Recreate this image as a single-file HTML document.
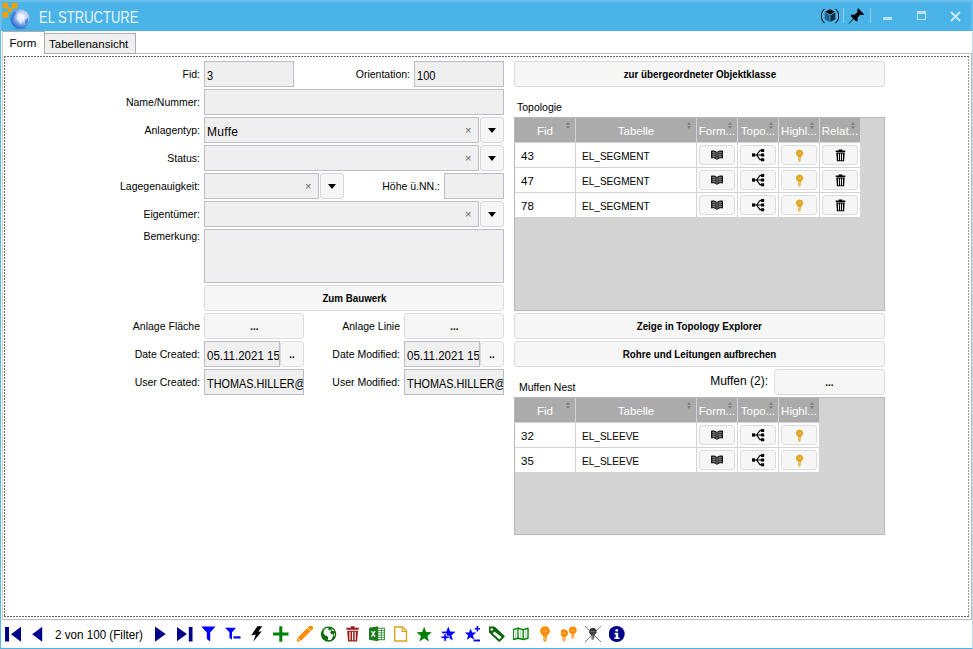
<!DOCTYPE html>
<html><head><meta charset="utf-8"><title>EL STRUCTURE</title>
<style>
html,body{margin:0;padding:0;}
body{width:973px;height:649px;overflow:hidden;background:#fff;font-family:"Liberation Sans",sans-serif;position:relative;}
#win{position:absolute;left:0;top:0;width:971px;height:648px;border:1px solid #4ab3e8;border-top:none;border-left-color:#5cbaea;border-right-color:#b4dcf4;background:#fff;}
#title{position:absolute;left:0;top:0;width:973px;height:31px;background:#4ab3e8;}
#title .hl{position:absolute;left:0;top:0;width:973px;height:2px;background:#68bfec;}
#title .t{position:absolute;left:39px;top:6.5px;font-size:16.5px;color:#fff;line-height:20px;white-space:nowrap;transform:scaleX(.79);transform-origin:0 50%;opacity:.88;}
.abs{position:absolute;}
.tab{position:absolute;font-size:11.5px;line-height:16px;color:#000;box-sizing:border-box;border:1px solid #acacac;white-space:nowrap;}
#frame{position:absolute;left:2px;top:53px;width:970px;height:567px;box-sizing:border-box;border:1px solid #bdbdbd;border-left-color:#d0d0d0;background:#fff;}
#dots{position:absolute;left:4px;top:56px;width:965px;height:561px;
 background:
 repeating-linear-gradient(90deg,#666 0 2px,transparent 2px 3px) left top/100% 1px no-repeat,
 repeating-linear-gradient(90deg,#666 0 2px,transparent 2px 3px) left bottom/100% 1px no-repeat,
 repeating-linear-gradient(180deg,#666 0 2px,transparent 2px 3px) left top/1px 100% no-repeat,
 repeating-linear-gradient(180deg,#999 0 2px,transparent 2px 3px) right top/1px 100% no-repeat;}
.lbl{position:absolute;font-size:10.5px;line-height:14px;color:#000;white-space:nowrap;text-align:right;}
.tb{position:absolute;box-sizing:border-box;border:1px solid #bbbdc6;background:#efefef;font-size:12px;line-height:27px;color:#000;padding-left:2px;white-space:nowrap;overflow:hidden;}
.btn{position:absolute;box-sizing:border-box;border:1px solid #dcdcdc;background:#f6f6f6;border-radius:3px;font-size:9.9px;font-weight:bold;color:#000;text-align:center;white-space:nowrap;}
.dd{border-color:#d3d5db;}
.x{position:absolute;font-size:11px;color:#666;line-height:12px;}
.arr{position:absolute;width:0;height:0;border-left:4px solid transparent;border-right:4px solid transparent;border-top:5px solid #000;}
.grid{position:absolute;box-sizing:border-box;border:1px solid #b8b8b8;background:#d3d3d3;}
.gh{position:absolute;background:#ababab;color:#fff;font-size:11.5px;line-height:26px;height:24px;text-align:center;white-space:nowrap;overflow:hidden;}
.gc{position:absolute;background:#fff;color:#000;font-size:11.5px;line-height:27px;height:24px;white-space:nowrap;overflow:hidden;}
.gb{position:absolute;box-sizing:border-box;border:1px solid #dcdcdc;background:#f6f6f6;border-radius:3px;width:35px;height:20px;}
.w{display:inline-block;transform:translateY(.6px);}
.bt{display:inline-block;font-size:10.5px;transform:scaleX(.93);}
.cap{display:inline-block;transform:scaleX(.92);transform-origin:0 50%;}
.so{position:absolute;right:4px;top:4px;width:5px;height:8px;}
.so:before{content:"";position:absolute;left:0;top:0;border-left:2.5px solid transparent;border-right:2.5px solid transparent;border-bottom:3px solid #808080;}
.so:after{content:"";position:absolute;left:0;top:4px;border-left:2.5px solid transparent;border-right:2.5px solid transparent;border-top:3px solid #808080;}
.ic{position:absolute;left:10px;top:1px;}
.ti{position:absolute;top:6px;overflow:visible;}
.nav{position:absolute;left:53.5px;top:5px;font-size:13px;line-height:20px;white-space:nowrap;color:#000;}
.nav span{display:inline-block;transform:scaleX(.895);transform-origin:0 50%;}
#bar{position:absolute;left:1px;top:620px;width:971px;height:27px;background:#fff;}
</style></head><body>
<svg width="0" height="0" style="position:absolute">
<defs>
<symbol id="i-book" viewBox="0 0 16 16"><path d="M1 3.700C3 3.200 5.200 3.500 7 4.900C8.800 3.500 11 3.200 13 3.700V11.500C11 11 8.800 11.200 7 12.900C5.200 11.200 3 11 1 11.500Z" fill="#1a1a1a"/><path d="M7 5V12.600M2 5.600C3.600 5.200 5 5.500 6.400 6.500M2 7.600C3.600 7.200 5 7.500 6.400 8.500M2 9.600C3.600 9.200 5 9.500 6.400 10.500M12 5.600C10.400 5.200 9 5.500 7.600 6.500M12 7.600C10.400 7.200 9 7.500 7.600 8.500M12 9.600C10.400 9.200 9 9.500 7.600 10.500M4 4.600V10.500M10 4.600V10.500" stroke="#fff" stroke-opacity=".6" stroke-width=".6" fill="none"/></symbol>
<symbol id="i-topo" viewBox="0 0 16 16"><path d="M3.500 8H10.500M10.500 3.500L9 3.500L5.600 8L9 12.700L10.500 12.700" stroke="#000" stroke-width="1.200" fill="none"/><rect x="1" y="6.400" width="3.100" height="3.200" fill="#000"/><rect x="9.900" y="2" width="3.300" height="2.900" rx=".5" fill="#000"/><rect x="9.900" y="6.500" width="3.300" height="3.100" rx=".5" fill="#000"/><rect x="9.900" y="11.300" width="3.300" height="2.900" rx=".5" fill="#000"/></symbol>
<symbol id="i-bulb" viewBox="0 0 16 16"><g transform="translate(1.400,2.250) scale(.77)"><path d="M8 .2a4.800 4.800 0 0 0-2.700 8.800c.6.500.8 1 .8 1.700h3.800c0-.7.200-1.200.8-1.700A4.800 4.800 0 0 0 8 .2Z" fill="currentColor"/><path d="M6 12.100l4-.9M6 13.500l4-.9M6.300 14.900l3.400-.8M7.300 15.800l1.500-.3" stroke="currentColor" stroke-width="1.100" fill="none"/><path d="M6.600 4.600h1.100v1.300H6.600zM8.400 4.600h1.100v1.300H8.400z" fill="#fff" fill-opacity=".55"/></g></symbol>
<symbol id="i-trash" viewBox="0 0 16 16"><path d="M5.700 2.400h3.600v1.200h3v1.500h-9.600v-1.500h3z" fill="currentColor"/><path d="M3.300 5.600h8.400l-.6 8.700H3.900Z" fill="currentColor"/><path d="M5.500 6.600v6.700M7.500 6.600v6.700M9.500 6.600v6.700" stroke="#fff" stroke-width=".9"/></symbol>
<symbol id="t-first" viewBox="0 0 16 16"><rect x="0" y="1" width="4" height="14.500" fill="#00008b"/><path d="M16 .7V15.800L6 8.250Z" fill="#00008b"/></symbol>
<symbol id="t-prev" viewBox="0 0 16 16"><path d="M13.200 .7V15.800L3.200 8.250Z" fill="#00008b"/></symbol>
<symbol id="t-next" viewBox="0 0 16 16"><path d="M2 .5V15.700L12.700 8.100Z" fill="#00008b"/></symbol>
<symbol id="t-last" viewBox="0 0 16 16"><path d="M-.8 .5V15.700L9.900 8.100Z" fill="#00008b"/><rect x="11.800" y="1" width="3.700" height="14.500" fill="#00008b"/></symbol>
<symbol id="t-filter" viewBox="0 0 16 16"><path d="M.2 .5H14.500L9.200 6.500V15.500L5.800 13V6.500Z" fill="#0000ff"/></symbol>
<symbol id="t-filterm" viewBox="0 0 16 16"><path d="M0 1.700H11L7 6.300V13.700L4.400 11.800V6.300Z" fill="#0000ff"/><rect x="8.500" y="10.300" width="7" height="2.200" fill="#0000ff"/></symbol>
<symbol id="t-bolt" viewBox="0 0 16 16"><path d="M8.300 .3H13.200L9.300 5.800L12.800 5.200L4.200 15.700L6.800 8.600L2.200 9.600Z" fill="#000"/></symbol>
<symbol id="t-plus" viewBox="0 0 16 16"><path d="M6.300 .3h3v6.200h6.200v3h-6.200v6.200h-3v-6.200h-6.200v-3h6.200z" fill="#008000"/></symbol>
<symbol id="t-pencil" viewBox="0 0 16 16"><g transform="translate(-.4,15.900) rotate(-45)" fill="#ff8c00"><path d="M0 0L3.200 -2.300V2.300Z"/><rect x="3.900" y="-2.300" width="13.600" height="4.600"/><path d="M18.200 -2.300H20a2.300 2.300 0 0 1 0 4.600H18.200Z"/></g></symbol>
<symbol id="t-globe" viewBox="0 0 16 16"><circle cx="7.600" cy="8.100" r="7.700" fill="#0b6b0b"/><path d="M3.500 3.200C5 2 6.500 1.900 7.800 2.300L7.200 3.600L8.600 4.600L9.800 3.400L10.400 4.600L9.200 6.200L10 7.800L11.800 8.200L12.600 9.800L11.400 11.600L10.200 13.800C9 14.500 7.600 14.400 6.600 13.800L7.400 11.800L6.200 10L4.200 9.400L2.600 7.600C2.300 6 2.600 4.400 3.500 3.200Z" fill="#fff"/><path d="M10.600 2.600L12.800 4.200L13.400 5.200L11.600 5L10.800 4Z" fill="#fff"/><path d="M13.200 6.600L14 8.400L13.400 10.400L12.800 8.400Z" fill="#fff" fill-opacity=".85"/></symbol>
<symbol id="t-excel" viewBox="0 0 16 16"><rect x="7" y="2.200" width="8.400" height="11.500" fill="#fff" stroke="#2e8b2e" stroke-width="1"/><path d="M9 4.500h6M9 6.800h6M9 9.100h6M9 11.400h6M12.300 2.500v11" stroke="#2e8b2e" stroke-width=".8"/><path d="M-.6 1.900L9.200 .3V15.300L-.6 13.600Z" fill="#1e7a1e"/><path d="M2.600 5L6 10.600M6 5L2.600 10.600" stroke="#fff" stroke-width="1.300"/></symbol>
<symbol id="t-page" viewBox="0 0 16 16"><path d="M1.700 1H9.500L13.500 5V15H1.700Z" fill="#fff" stroke="#daa520" stroke-width="1.400"/><path d="M9.300 1V5.300H13.500" fill="none" stroke="#daa520" stroke-width="1.200"/></symbol>
<symbol id="t-star" viewBox="0 0 16 16"><path transform="translate(-.4,.8) scale(.95,.96)" d="M8 0l2.100 5.500 5.900.300-4.600 3.700 1.600 5.700L8 12l-5 3.200 1.600-5.700L0 5.800l5.900-.300z" fill="currentColor"/></symbol>
<symbol id="t-tag" viewBox="0 0 16 16"><path d="M-.7 1.700a1.300 1.300 0 0 1 1.300-1.300H4.800a1.500 1.500 0 0 1 1 .4L15.200 9.400a1.300 1.300 0 0 1 0 1.900L11.200 15.300a1.300 1.300 0 0 1-1.900 0L-.3 6.200a1.500 1.500 0 0 1-.4-1Z" fill="#0a640a"/><path d="M5.300 5.500L12.600 10.900L10.400 13.400L3.700 7.500Z" fill="#fff"/><circle cx="2.700" cy="3.400" r="1.250" fill="#fff"/></symbol>
<symbol id="t-map" viewBox="0 0 16 16"><path d="M.2 3.600L5 2.300L10.200 3.600L15 2.300V12.200L10.200 13.500L5 12.200L.2 13.500Z" fill="#fff" stroke="#008000" stroke-width="1.400" stroke-linejoin="round"/><path d="M5 2.500V12.200M10.200 3.600V13.500" stroke="#008000" stroke-width="1.300"/><path d="M2.700 3.800V12M7.600 3.800V12.200M12.600 3.800V12" stroke="#008000" stroke-opacity=".3" stroke-width="1"/></symbol>
<symbol id="t-bulb" viewBox="0 0 16 16"><path d="M8 .2a4.800 4.800 0 0 0-2.700 8.800c.6.500.8 1 .8 1.700h3.800c0-.7.200-1.200.8-1.700A4.800 4.800 0 0 0 8 .2Z" fill="currentColor"/><path d="M6 12.100l4-.9M6 13.500l4-.9M6.300 14.900l3.400-.8M7.300 15.800l1.500-.3" stroke="currentColor" stroke-width="1" fill="none"/><path d="M6.200 4.500v1.600M7.900 4.500v1.600M9.600 4.500v1.600" stroke="#fff" stroke-opacity=".7" stroke-width=".7"/></symbol>
<symbol id="t-info" viewBox="0 0 16 16"><circle cx="7.700" cy="8" r="8" fill="#00008b"/><path d="M6.400 3.200h2.700v2.300H6.400zM5.600 6.800h3.600v4.700h1.400v1.600H5.400v-1.600h1.300v-3.100H5.600z" fill="#fff"/></symbol>
<symbol id="t-trash" viewBox="0 0 16 16"><path d="M5.800 .2h3.800v1.500h4.200v2H1.400v-2h4.400z" fill="#9b1c1c"/><path d="M2.200 4.700h10.800l-.9 10.900H3.100Z" fill="#9b1c1c"/><path d="M5 5.800v8.400M7.600 5.800v8.400M10.200 5.800v8.400" stroke="#fff" stroke-width="1.100"/></symbol>
<symbol id="t-starp" viewBox="0 0 16 16"><path d="M7.300 .5l1.900 5 5.400.3-4.200 3.400 1.500 5.400-4.600-3-4.600 3 1.500-5.400L0 5.800l5.400-.3z" fill="#0000ff"/><path d="M2.900 7.600h2.400v2.500h2.800v2.400H5.300v2.800H2.900v-2.800H.1v-2.400h2.800z" fill="#0000ff" stroke="#fff" stroke-width=".8"/></symbol>
<symbol id="t-starpm" viewBox="0 0 16 16"><path d="M5.600 2.500l1.500 3.900 4.300.2-3.400 2.700 1.200 4.400-3.600-2.400-3.700 2.400 1.200-4.400L-.3 6.600l4.300-.2z" fill="#0000ff"/><path d="M12.400 0v5.500M9.800 2.750h5.200" stroke="#0000ff" stroke-width="1.500"/><path d="M8.600 14.500h6.400" stroke="#0000ff" stroke-width="1.900"/></symbol>
<symbol id="t-bulb2" viewBox="0 0 16 16"><g transform="translate(-3.300,3) scale(.8)"><use href="#t-bulb"/></g><g transform="translate(5.400,.2) scale(.8)"><use href="#t-bulb"/></g></symbol>
<symbol id="t-bulbx" viewBox="0 0 16 16"><g transform="translate(1.600,1.500) scale(.78)"><use href="#t-bulb"/></g><path d="M0 .2L16 15.900M16 .2L0 15.900" stroke="#555" stroke-width=".8"/></symbol>
</defs></svg>
<div id="win"></div>
<div id="title"><div class="hl"></div><div class="hl" style="width:2px;height:31px;"></div><div class="hl" style="left:971px;width:2px;height:31px;"></div><svg class="abs" style="left:0;top:0;overflow:visible" width="32" height="31" viewBox="0 0 32 31">
<defs><radialGradient id="gl" cx="62%" cy="38%" r="70%"><stop offset="0" stop-color="#f0f5ff"/><stop offset=".4" stop-color="#b5cdf3"/><stop offset=".75" stop-color="#4d86da"/><stop offset="1" stop-color="#2259bd"/></radialGradient></defs>
<rect x="2.500" y="2.800" width="5.800" height="5.600" fill="#f0a000"/><rect x="11.700" y="2.800" width="5.600" height="5.600" fill="#f0a000"/><rect x="2.500" y="11.700" width="5.800" height="5.900" fill="#f0a000"/>
<path d="M8 8L12 12M12 8L8 12" stroke="#f0a000" stroke-width="2"/>
<ellipse cx="20" cy="28.300" rx="7" ry="1.200" fill="#2a86c8" opacity=".5"/>
<circle cx="20.100" cy="18.800" r="9.700" fill="url(#gl)"/>
<path d="M12.500 14.500C13.500 12.500 15 11.500 16 12L15.500 14.500L14 16.500L13.500 20L12 19Z" fill="#3f78d0" opacity=".8"/>
<path d="M25.500 19.500L27.800 18L28 22L26 24.500L24.800 22.500Z" fill="#3f78d0" opacity=".75"/>
<path d="M14 23L17 24.500L20 27L16.500 26.800Z" fill="#4c84d6" opacity=".6"/>
<path d="M17 14.500L20.500 13.500L24 15L25 18L22.500 21.500L20.500 24.500L18.500 21L16.500 19L17.500 16.500Z" fill="#fff" opacity=".55"/>
</svg>
<svg class="abs" style="left:821px;top:8px" width="18" height="16" viewBox="0 0 18 16"><path d="M3.500 .8C1 3 .3 5.500 .3 8s.7 5 3.200 7.200M14.500 .8C17 3 17.700 5.500 17.700 8s-.7 5-3.200 7.200" fill="none" stroke="#10202c" stroke-width="1.100"/><path d="M9 1.200L14 3.800L9 6.400L4 3.800Z" fill="#05080a"/><path d="M3.700 4.600L8.600 7.200V14L3.700 11.200Z" fill="#1f5f86"/><path d="M14.300 4.600L9.400 7.200V14L14.300 11.200Z" fill="#0d2d42"/></svg>
<div class="abs" style="left:843px;top:8px;width:1px;height:15px;background:#8fd0f2;"></div>
<svg class="abs" style="left:848px;top:8px" width="17" height="16" viewBox="0 0 17 16"><path d="M10.200 .3L16.300 6.400L14.600 7L12.200 6.700L9.500 9.800L9.800 12.600L8.300 13.600L5.800 11.100L1 15.800L.6 15.400L5.200 10.500L2.700 8L3.700 6.500L6.600 6.800L9.500 4L9.200 1.800Z" fill="#000"/></svg>
<div class="abs" style="left:870px;top:8px;width:1px;height:15px;background:#8fd0f2;"></div>
<div class="abs" style="left:883px;top:17px;width:9px;height:3px;background:#bfe3f6;"></div>
<div class="abs" style="left:917px;top:11px;width:9px;height:9px;box-sizing:border-box;border:1px solid #bfe3f6;border-top-width:3px;"></div>
<svg class="abs" style="left:950px;top:11px" width="11" height="11" viewBox="0 0 11 11"><path d="M1 1L10 10M10 1L1 10" stroke="#c8e7f7" stroke-width="2"/></svg>
<div class="t">EL STRUCTURE</div></div>
<div id="frame"></div>
<div class="tab" style="left:44px;top:33px;width:92px;height:21px;background:#efefef;padding:2px 0 0 4px;">Tabellenansicht</div>
<div class="tab" style="left:2px;top:31px;width:43px;height:23px;background:#fff;border-bottom:none;border-left-color:#d0d0d0;padding:3px 0 0 6.5px;">Form</div>
<div id="dots"></div>
<div id="form">
<!-- left column labels -->
<div class="lbl" style="right:773px;top:67px;">Fid:</div>
<div class="lbl" style="right:773px;top:95px;">Name/Nummer:</div>
<div class="lbl" style="right:773px;top:123px;">Anlagentyp:</div>
<div class="lbl" style="right:773px;top:151px;">Status:</div>
<div class="lbl" style="right:773px;top:179px;">Lagegenauigkeit:</div>
<div class="lbl" style="right:773px;top:207px;">Eigentümer:</div>
<div class="lbl" style="right:773px;top:229px;">Bemerkung:</div>
<div class="lbl" style="right:773px;top:319px;">Anlage Fläche</div>
<div class="lbl" style="right:773px;top:347px;">Date Created:</div>
<div class="lbl" style="right:773px;top:375px;">User Created:</div>
<div class="lbl" style="right:563px;top:67px;">Orientation:</div>
<div class="lbl" style="right:533px;top:179px;">Höhe ü.NN.:</div>
<div class="lbl" style="right:573px;top:319px;">Anlage Linie</div>
<div class="lbl" style="right:573px;top:347px;">Date Modified:</div>
<div class="lbl" style="right:573px;top:375px;">User Modified:</div>
<!-- text boxes -->
<div class="tb" style="left:204px;top:61px;width:90px;height:26px;"><span class="w"><span class="cap">3</span></span></div>
<div class="tb" style="left:414px;top:61px;width:90px;height:26px;"><span class="w"><span class="cap">100</span></span></div>
<div class="tb" style="left:204px;top:89px;width:300px;height:26px;"></div>
<div class="tb" style="left:204px;top:117px;width:275px;height:26px;letter-spacing:.3px;"><span class="w">Muffe</span></div>
<div class="btn dd" style="left:480px;top:117px;width:24px;height:26px;"></div><div class="arr" style="left:488px;top:128px;"></div><div class="x" style="left:465px;top:124px;">×</div>
<div class="tb" style="left:204px;top:145px;width:275px;height:26px;"></div>
<div class="btn dd" style="left:480px;top:145px;width:24px;height:26px;"></div><div class="arr" style="left:488px;top:156px;"></div><div class="x" style="left:465px;top:152px;">×</div>
<div class="tb" style="left:204px;top:173px;width:115px;height:26px;"></div>
<div class="btn dd" style="left:320px;top:173px;width:24px;height:26px;"></div><div class="arr" style="left:328px;top:184px;"></div><div class="x" style="left:305px;top:180px;">×</div>
<div class="tb" style="left:444px;top:173px;width:60px;height:26px;"></div>
<div class="tb" style="left:204px;top:201px;width:275px;height:26px;"></div>
<div class="btn dd" style="left:480px;top:201px;width:24px;height:26px;"></div><div class="arr" style="left:488px;top:212px;"></div><div class="x" style="left:465px;top:208px;">×</div>
<div class="tb" style="left:204px;top:229px;width:300px;height:54px;"></div>
<div class="btn" style="left:204px;top:285px;width:300px;height:26px;line-height:25px;"><span class="bt">Zum Bauwerk</span></div>
<div class="btn" style="left:204px;top:313px;width:100px;height:26px;line-height:25px;"><span class="bt">...</span></div>
<div class="btn" style="left:404px;top:313px;width:100px;height:26px;line-height:25px;"><span class="bt">...</span></div>
<div class="tb" style="left:204px;top:341px;width:76px;height:26px;"><span class="w"><span class="cap" style="transform:scaleX(.96)">05.11.2021 15</span></span></div>
<div class="btn" style="left:280px;top:341px;width:24px;height:26px;line-height:25px;"><span class="bt">..</span></div>
<div class="tb" style="left:404px;top:341px;width:76px;height:26px;"><span class="w"><span class="cap" style="transform:scaleX(.96)">05.11.2021 15</span></span></div>
<div class="btn" style="left:480px;top:341px;width:24px;height:26px;line-height:25px;"><span class="bt">..</span></div>
<div class="tb" style="left:204px;top:369px;width:100px;height:26px;"><span class="w"><span class="cap" style="transform:scaleX(.905)">THOMAS.HILLER@</span></span></div>
<div class="tb" style="left:404px;top:369px;width:100px;height:26px;"><span class="w"><span class="cap" style="transform:scaleX(.905)">THOMAS.HILLER@</span></span></div>
<!-- right column -->
<div class="btn" style="left:514px;top:61px;width:371px;height:26px;line-height:25px;"><span class="bt">zur übergeordneter Objektklasse</span></div>
<div class="lbl" style="left:517px;top:100px;">Topologie</div>
<div class="grid" id="g1" style="left:514px;top:117px;width:371px;height:194px;">
<div class="gh" style="left:0px;top:0;width:60px;">Fid<i class="so"></i></div>
<div class="gh" style="left:61px;top:0;width:120px;">Tabelle<i class="so"></i></div>
<div class="gh" style="left:182px;top:0;width:40px;">Form...<i class="so"></i></div>
<div class="gh" style="left:223px;top:0;width:40px;">Topo...<i class="so"></i></div>
<div class="gh" style="left:264px;top:0;width:40px;">Highl...<i class="so"></i></div>
<div class="gh" style="left:305px;top:0;width:40px;">Relat...<i class="so"></i></div>
<div class="gc" style="left:0;top:25px;width:60px;"><span style="padding-left:6px">43</span></div>
<div class="gc" style="left:61px;top:25px;width:120px;"><span class="cap" style="margin-left:6px;transform:scaleX(.875)">EL_SEGMENT</span></div>
<div class="gc" style="left:182px;top:25px;width:40px;"><div class="gb" style="left:2px;top:2px;width:36px;"><svg class="ic" width="16" height="16" viewBox="0 0 16 16"><use href="#i-book"/></svg></div></div>
<div class="gc" style="left:223px;top:25px;width:40px;"><div class="gb" style="left:2px;top:2px;width:36px;"><svg class="ic" width="16" height="16" viewBox="0 0 16 16"><use href="#i-topo"/></svg></div></div>
<div class="gc" style="left:264px;top:25px;width:40px;"><div class="gb" style="left:2px;top:2px;width:36px;"><svg class="ic" width="16" height="16" viewBox="0 0 16 16"><use href="#i-bulb" style="color:#e0a826"/></svg></div></div>
<div class="gc" style="left:305px;top:25px;width:40px;"><div class="gb" style="left:2px;top:2px;width:36px;"><svg class="ic" width="16" height="16" viewBox="0 0 16 16"><use href="#i-trash"/></svg></div></div>
<div class="gc" style="left:0;top:50px;width:60px;"><span style="padding-left:6px">47</span></div>
<div class="gc" style="left:61px;top:50px;width:120px;"><span class="cap" style="margin-left:6px;transform:scaleX(.875)">EL_SEGMENT</span></div>
<div class="gc" style="left:182px;top:50px;width:40px;"><div class="gb" style="left:2px;top:2px;width:36px;"><svg class="ic" width="16" height="16" viewBox="0 0 16 16"><use href="#i-book"/></svg></div></div>
<div class="gc" style="left:223px;top:50px;width:40px;"><div class="gb" style="left:2px;top:2px;width:36px;"><svg class="ic" width="16" height="16" viewBox="0 0 16 16"><use href="#i-topo"/></svg></div></div>
<div class="gc" style="left:264px;top:50px;width:40px;"><div class="gb" style="left:2px;top:2px;width:36px;"><svg class="ic" width="16" height="16" viewBox="0 0 16 16"><use href="#i-bulb" style="color:#e0a826"/></svg></div></div>
<div class="gc" style="left:305px;top:50px;width:40px;"><div class="gb" style="left:2px;top:2px;width:36px;"><svg class="ic" width="16" height="16" viewBox="0 0 16 16"><use href="#i-trash"/></svg></div></div>
<div class="gc" style="left:0;top:75px;width:60px;"><span style="padding-left:6px">78</span></div>
<div class="gc" style="left:61px;top:75px;width:120px;"><span class="cap" style="margin-left:6px;transform:scaleX(.875)">EL_SEGMENT</span></div>
<div class="gc" style="left:182px;top:75px;width:40px;"><div class="gb" style="left:2px;top:2px;width:36px;"><svg class="ic" width="16" height="16" viewBox="0 0 16 16"><use href="#i-book"/></svg></div></div>
<div class="gc" style="left:223px;top:75px;width:40px;"><div class="gb" style="left:2px;top:2px;width:36px;"><svg class="ic" width="16" height="16" viewBox="0 0 16 16"><use href="#i-topo"/></svg></div></div>
<div class="gc" style="left:264px;top:75px;width:40px;"><div class="gb" style="left:2px;top:2px;width:36px;"><svg class="ic" width="16" height="16" viewBox="0 0 16 16"><use href="#i-bulb" style="color:#e0a826"/></svg></div></div>
<div class="gc" style="left:305px;top:75px;width:40px;"><div class="gb" style="left:2px;top:2px;width:36px;"><svg class="ic" width="16" height="16" viewBox="0 0 16 16"><use href="#i-trash"/></svg></div></div>
</div>
<div class="btn" style="left:514px;top:313px;width:371px;height:26px;line-height:25px;"><span class="bt">Zeige in Topology Explorer</span></div>
<div class="btn" style="left:514px;top:341px;width:371px;height:26px;line-height:25px;"><span class="bt">Rohre und Leitungen aufbrechen</span></div>
<div class="lbl" style="left:519px;top:380px;">Muffen Nest</div>
<div class="lbl" style="right:205px;top:374px;font-size:12px;">Muffen (2):</div>
<div class="btn" style="left:774px;top:369px;width:111px;height:26px;line-height:25px;"><span class="bt">...</span></div>
<div class="grid" id="g2" style="left:514px;top:397px;width:371px;height:138px;">
<div class="gh" style="left:0px;top:0;width:60px;">Fid<i class="so"></i></div>
<div class="gh" style="left:61px;top:0;width:120px;">Tabelle<i class="so"></i></div>
<div class="gh" style="left:182px;top:0;width:40px;">Form...<i class="so"></i></div>
<div class="gh" style="left:223px;top:0;width:40px;">Topo...<i class="so"></i></div>
<div class="gh" style="left:264px;top:0;width:40px;">Highl...<i class="so"></i></div>
<div class="gc" style="left:0;top:25px;width:60px;"><span style="padding-left:6px">32</span></div>
<div class="gc" style="left:61px;top:25px;width:120px;"><span class="cap" style="margin-left:6px;transform:scaleX(.875)">EL_SLEEVE</span></div>
<div class="gc" style="left:182px;top:25px;width:40px;"><div class="gb" style="left:2px;top:2px;width:36px;"><svg class="ic" width="16" height="16" viewBox="0 0 16 16"><use href="#i-book"/></svg></div></div>
<div class="gc" style="left:223px;top:25px;width:40px;"><div class="gb" style="left:2px;top:2px;width:36px;"><svg class="ic" width="16" height="16" viewBox="0 0 16 16"><use href="#i-topo"/></svg></div></div>
<div class="gc" style="left:264px;top:25px;width:40px;"><div class="gb" style="left:2px;top:2px;width:36px;"><svg class="ic" width="16" height="16" viewBox="0 0 16 16"><use href="#i-bulb" style="color:#e0a826"/></svg></div></div>
<div class="gc" style="left:0;top:50px;width:60px;"><span style="padding-left:6px">35</span></div>
<div class="gc" style="left:61px;top:50px;width:120px;"><span class="cap" style="margin-left:6px;transform:scaleX(.875)">EL_SLEEVE</span></div>
<div class="gc" style="left:182px;top:50px;width:40px;"><div class="gb" style="left:2px;top:2px;width:36px;"><svg class="ic" width="16" height="16" viewBox="0 0 16 16"><use href="#i-book"/></svg></div></div>
<div class="gc" style="left:223px;top:50px;width:40px;"><div class="gb" style="left:2px;top:2px;width:36px;"><svg class="ic" width="16" height="16" viewBox="0 0 16 16"><use href="#i-topo"/></svg></div></div>
<div class="gc" style="left:264px;top:50px;width:40px;"><div class="gb" style="left:2px;top:2px;width:36px;"><svg class="ic" width="16" height="16" viewBox="0 0 16 16"><use href="#i-bulb" style="color:#e0a826"/></svg></div></div>
</div>
</div>
<div id="bar">
<svg class="ti" style="left:4px;" width="16" height="16" viewBox="0 0 16 16"><use href="#t-first"/></svg>
<svg class="ti" style="left:28px;" width="16" height="16" viewBox="0 0 16 16"><use href="#t-prev"/></svg>
<div class="nav"><span>2 von 100 (Filter)</span></div>
<svg class="ti" style="left:152px;" width="16" height="16" viewBox="0 0 16 16"><use href="#t-next"/></svg>
<svg class="ti" style="left:176px;" width="16" height="16" viewBox="0 0 16 16"><use href="#t-last"/></svg>
<svg class="ti" style="left:200px;" width="16" height="16" viewBox="0 0 16 16"><use href="#t-filter"/></svg>
<svg class="ti" style="left:224px;" width="16" height="16" viewBox="0 0 16 16"><use href="#t-filterm"/></svg>
<svg class="ti" style="left:248px;" width="16" height="16" viewBox="0 0 16 16"><use href="#t-bolt"/></svg>
<svg class="ti" style="left:272px;" width="16" height="16" viewBox="0 0 16 16"><use href="#t-plus"/></svg>
<svg class="ti" style="left:296px;" width="16" height="16" viewBox="0 0 16 16"><use href="#t-pencil"/></svg>
<svg class="ti" style="left:320px;" width="16" height="16" viewBox="0 0 16 16"><use href="#t-globe"/></svg>
<svg class="ti" style="left:344px;" width="16" height="16" viewBox="0 0 16 16"><use href="#t-trash"/></svg>
<svg class="ti" style="left:368px;" width="16" height="16" viewBox="0 0 16 16"><use href="#t-excel"/></svg>
<svg class="ti" style="left:392px;" width="16" height="16" viewBox="0 0 16 16"><use href="#t-page"/></svg>
<svg class="ti" style="left:416px;color:#008000;" width="16" height="16" viewBox="0 0 16 16"><use href="#t-star"/></svg>
<svg class="ti" style="left:440px;" width="16" height="16" viewBox="0 0 16 16"><use href="#t-starp"/></svg>
<svg class="ti" style="left:464px;" width="16" height="16" viewBox="0 0 16 16"><use href="#t-starpm"/></svg>
<svg class="ti" style="left:488px;" width="16" height="16" viewBox="0 0 16 16"><use href="#t-tag"/></svg>
<svg class="ti" style="left:512px;" width="16" height="16" viewBox="0 0 16 16"><use href="#t-map"/></svg>
<svg class="ti" style="left:536px;color:#ff8c00;" width="16" height="16" viewBox="0 0 16 16"><use href="#t-bulb"/></svg>
<svg class="ti" style="left:560px;color:#ff8c00;" width="16" height="16" viewBox="0 0 16 16"><use href="#t-bulb2"/></svg>
<svg class="ti" style="left:584px;color:#333;" width="16" height="16" viewBox="0 0 16 16"><use href="#t-bulbx"/></svg>
<svg class="ti" style="left:608px;" width="16" height="16" viewBox="0 0 16 16"><use href="#t-info"/></svg>
</div>
</body></html>
